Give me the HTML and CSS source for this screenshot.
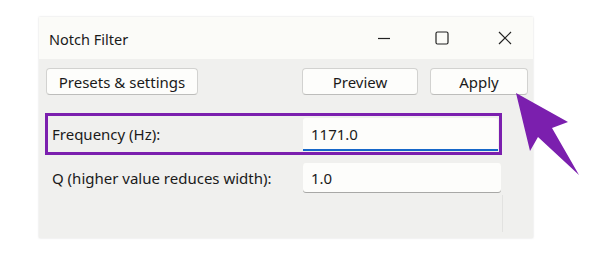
FILE: index.html
```html
<!DOCTYPE html>
<html lang="en">
<head>
<meta charset="UTF-8">
<meta name="viewport" content="width=device-width, initial-scale=1.0">
<title>Notch Filter</title>
<link rel="stylesheet" href="styles.css">
</head>
<body>
<div class="stage">
    <div class="dialog">
        <div class="titleBar">
            <span class="title">Notch Filter</span>
            <div class="winControls">
                <span class="ctl ctlMin"><svg width="14" height="14" viewBox="0 0 14 14"><path d="M1 7.5h12" stroke="#222" stroke-width="1.2"/></svg></span>
                <span class="ctl ctlMax"><svg width="14" height="14" viewBox="0 0 14 14"><rect x="1" y="1" width="12" height="12" rx="1.5" fill="none" stroke="#222" stroke-width="1.2"/></svg></span>
                <span class="ctl ctlClose"><svg width="14" height="14" viewBox="0 0 14 14"><path d="M1 1L13 13M13 1L1 13" stroke="#222" stroke-width="1.2"/></svg></span>
            </div>
        </div>
        <div class="dialogBody">
            <div class="buttonRow">
                <button class="btn btnPresets">Presets &amp; settings</button>
                <div class="spacer"></div>
                <button class="btn btnPreview">Preview</button>
                <button class="btn btnApply">Apply</button>
            </div>
            <!-- highlighted row -->
            <div class="fieldRow highlight">
                <label class="fieldLabel" for="frequency">Frequency (Hz):</label>
                <input class="fieldInput focused" type="text" id="frequency" value="1171.0">
            </div>
            <div class="fieldRow">
                <label class="fieldLabel" for="q">Q (higher value reduces width):</label>
                <input class="fieldInput" type="text" id="q" value="1.0">
            </div>
            <div class="bottomLine"></div>
        </div>
    </div>
    <svg class="pointer" width="90" height="100" viewBox="505 85 90 100">
        <polygon points="516,93 568,122 552,128 579,175 538,137 530,151" fill="#7b1fae"/>
    </svg>
</div>
</body>
</html>
```

FILE: styles.css
```css
/* Notch filter dialog */
body {
    margin: 0;
    background: #ffffff;
    font-family: "Noto Sans", "Open Sans", sans-serif;
    color: #1a1a1a;
}

.stage {
    position: relative;
    width: 600px;
    height: 279px;
    padding-top: 17px;
    box-sizing: border-box;
}

.dialog {
    margin-left: 39px;
    width: 494px;
    box-shadow: 0 0 2px rgba(0, 0, 0, 0.15);
}

.titleBar {
    height: 42px;
    background: #fbfbf8;
    display: flex;
    align-items: center;
    padding-left: 10px;
    box-sizing: border-box;
}

.title {
    font-size: 14.5px;
    flex: 1;
    padding-top: 2px;
}

.winControls {
    display: flex;
    align-items: center;
    gap: 44px;
    margin-right: 21px;
}

.ctl {
    display: flex;
}

.ctlClose {
    margin-left: 5px;
}

.dialogBody {
    background: #f0f0ee;
    height: 179px;
    padding: 9px 5px 0 6px;
    box-sizing: border-box;
    position: relative;
}

.buttonRow {
    display: flex;
    gap: 12px;
    margin-left: 1px;
}

.spacer {
    flex: 1;
}

.btn {
    height: 27px;
    background: #fdfdfb;
    border: 1px solid #d2d2d0;
    border-bottom-color: #bdbdbb;
    border-radius: 4px;
    font-family: "Noto Sans", "Open Sans", sans-serif;
    font-size: 15px;
    color: #1a1a1a;
    padding: 0;
}

.btnPresets {
    width: 152px;
}

.btnPreview {
    width: 116px;
}

.btnApply {
    width: 98px;
}

.fieldRow {
    display: flex;
    align-items: center;
    height: 29px;
    margin-top: 8px;
    padding-left: 7px;
}

.fieldRow.highlight {
    margin-top: 18px;
    width: 457px;
    height: 42px;
    border: 3px solid #7b1fae;
    box-sizing: border-box;
    padding-left: 4px;
}

.fieldLabel {
    width: 251px;
    font-size: 15px;
}

.fieldInput {
    width: 198px;
    height: 29px;
    box-sizing: border-box;
    border: none;
    border-radius: 3px;
    background: #fdfdfb;
    box-shadow: 0 1px 0 #a8a8a6;
    font-family: "Noto Sans", "Open Sans", sans-serif;
    font-size: 15px;
    color: #1a1a1a;
    padding: 0 0 0 8px;
}

.fieldInput.focused {
    width: 195px;
    height: 33px;
    box-shadow: none;
    border-bottom: 2px solid #1667c9;
    border-radius: 3px 3px 0 0;
    padding-top: 2px;
}

.bottomLine {
    position: absolute;
    left: 463px;
    top: 136px;
    width: 1px;
    height: 37px;
    background: #e2e2e0;
}

.pointer {
    position: absolute;
    left: 505px;
    top: 85px;
}
```
